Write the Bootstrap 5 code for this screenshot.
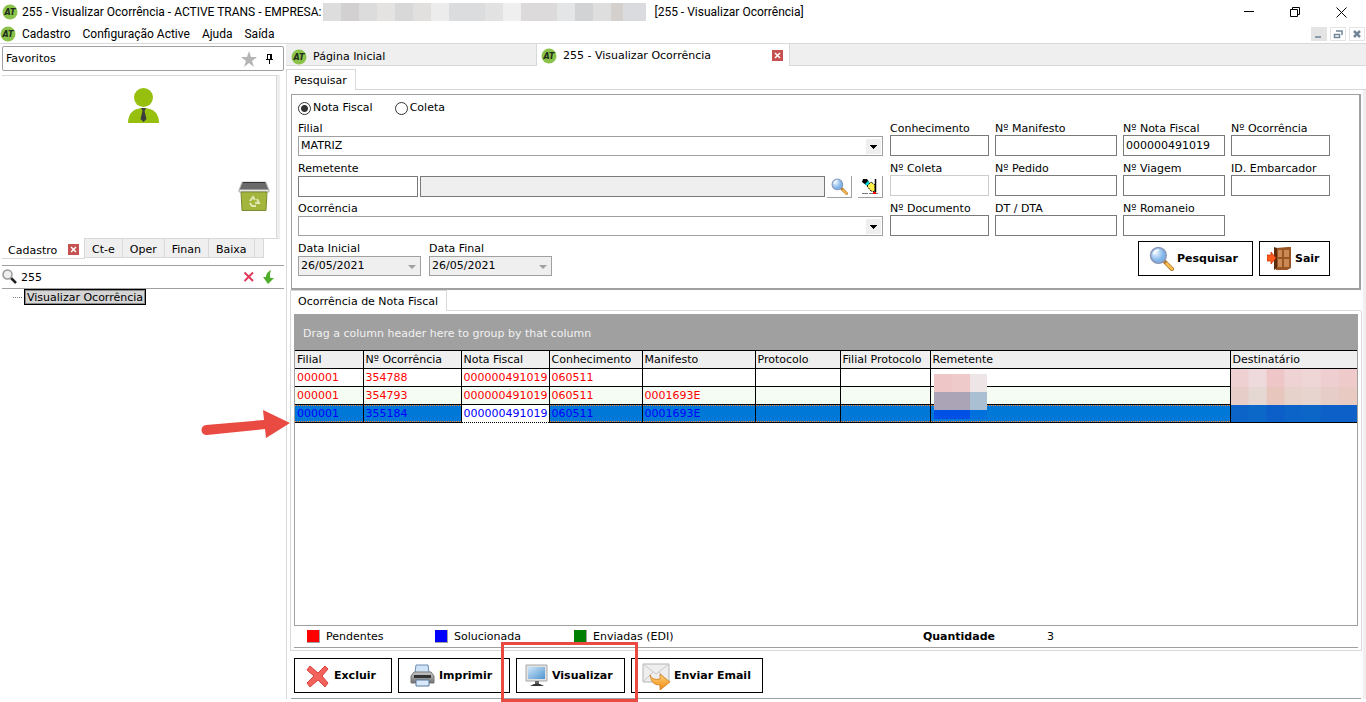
<!DOCTYPE html>
<html lang="pt-BR">
<head>
<meta charset="utf-8">
<meta name="viewport" content="width=device-width, initial-scale=1">
<title>255 - Visualizar Ocorrência - ACTIVE TRANS</title>
<link href="https://cdn.jsdelivr.net/npm/bootstrap@5.3.0/dist/css/bootstrap.min.css" rel="stylesheet">
<style>
:root{--line:#d9d9d9;--edge:#a0a0a0;--face:#efefef;--mark:#e94b43}
body{font:11px/14px "DejaVu Sans",Verdana,sans-serif;color:#000;background:#fff}
svg{display:block;flex:none}
button,input,select{font:inherit;color:inherit;border-radius:0}
.plain{border:0;background:none;padding:0}
a{color:inherit;text-decoration:none}
.ui{font:12px/16px Roboto,"Segoe UI",sans-serif}
.titlebar{height:24px;padding-left:2px}
.masked{width:323px;height:18px;margin:0 8px 0 2px;background:linear-gradient(90deg,#dedddd 0 18px,#d2d0d0 0 36px,#dcdcdc 0 54px,#e4e3e2 0 72px,#d8d8d9 0 90px,#e2e0df 0 108px,#ececec 0 126px,#dbdcdd 0 162px,#e2e2e2 0 180px,#efefef 0 198px,#dcdada 0 234px,#e4e5e6 0 252px,#d2d3d4 0 270px,#dedede 0 288px,#d4d0ce 0 300px,#dadbde 0)}
.winbtns{gap:35px;padding-right:19px}
.menubar{height:20px;border-bottom:1px solid var(--line);padding-right:1px}
.menubar nav{gap:12px}
.menubar>svg{margin-right:6px}
.mdi{gap:3px}
.mdi button{width:16px;height:14px;border:1px solid #e4e4e4}
.mdi button:first-child{background:#e4e4e4}
.side{width:284px;padding-left:2px}
.favhead{height:25px;margin-top:2px;border:1px solid var(--edge);border-radius:2px;padding:0 8px 0 3px}
.favs{height:164px;margin:4px 4px 0 0;border:1px solid var(--line);border-width:1px 3px 1px 0;border-right-color:var(--face);padding:12px 7px 26px 14px;box-shadow:inset -1px 0 var(--line)}
.sidetabs .t{height:19px;padding:4px 7px 0;background:var(--face);border:solid var(--line);border-width:0 1px 1px 0;white-space:nowrap;line-height:13px}
.sidetabs .t:last-child{padding:0 4px}
.sidetabs .on{height:21px;width:83px;background:#fff;padding:6px 5px 0 6px;margin-top:-1px}
.closer{width:11px;height:11px;background:#c75050;display:block}
.find{height:24px;margin-top:6px;border:solid var(--edge);border-width:1px 0;padding-right:10px}
.find input{min-width:0;padding:0 3px;outline:0;height:20px;width:100px}
.tree{padding-left:11px}
.tree i{width:9px;border-top:1px dotted #808080}
.tree a{border:1px solid #000;outline:1px solid #8a8a8a;outline-offset:-2px;background:#d4d4d4;padding:0 2px;height:16px;line-height:15px;margin-left:2px}
.work{min-width:1078px;margin-left:2px}
.doctabs{height:22px;background:var(--face);border-bottom:1px solid var(--line);padding-left:1px;margin-bottom:3px}
.doctabs .t{width:250px;padding:4px 6px 0 4px;border-right:1px solid var(--line);gap:6px}
.doctabs .on{width:253px;background:#fff;height:22px;padding-top:1px}
.pagetab{height:21px;padding:4px 8px 0 7px;border:solid var(--line);border-width:1px 1px 0;background:#fff}
.rest{border-bottom:1px solid var(--line)}
.page{border-left:1px solid var(--line);border-right:3px solid var(--face);padding:4px 2px 0 4px}
.query{border:1px solid var(--edge);border-width:1px 2px 2px 1px;padding:6px 29px 0 6px;height:196px;gap:7px}
.fld{height:40px}
.fld label{display:block;height:19px;padding-top:5px;white-space:nowrap;line-height:14px}
.radios+.fld{margin-top:2px}
.cell label{padding-top:1px;height:14px}
.txt{height:21px;border:1px solid #7a7a7a;padding:0 2px;width:100%;display:block;background:#fff}
.txt:disabled{border-color:#ccc}
.code{width:120px}
.ro{background:var(--face);min-width:0;margin:0 2px}
.drop{height:20px;border:1px solid var(--edge);padding:0 18px 0 2px;width:100%;appearance:none;display:block;opacity:1;background:#fff url("data:image/svg+xml,%3Csvg xmlns='http://www.w3.org/2000/svg' width='15' height='15'%3E%3Cpath fill='%23efefef' d='M0 0h15v15H0z'/%3E%3Cpath d='M4 6h7v1H10v1H9v1H8v1H7V9H6V8H5V7H4z'/%3E%3C/svg%3E") no-repeat right 1px center}
.drop:disabled{color:#000;background:#efefef url("data:image/svg+xml,%3Csvg xmlns='http://www.w3.org/2000/svg' width='15' height='15'%3E%3Cpath fill='%23a0a0a0' d='M4 6h8L8 10z'/%3E%3C/svg%3E") no-repeat right 1px center}
.date{width:123px}
.radios{height:14px;gap:22px}
.radios label{display:flex;align-items:center;gap:2px}
.radios input{appearance:none;margin:0;width:13px;height:13px;border:1px solid #333;border-radius:50%}
.radios input:checked{background:radial-gradient(circle,#333 0 3px,#fff 4px)}
.tool{width:25px;height:22px;border:solid var(--edge);border-width:0 1px 1px 0;background:#fff;padding:0 0 0 4px}
.tool+.tool{margin-left:6px}
.codes{display:grid;grid-template-columns:99px 122px 102px 99px;column-gap:6px;padding-top:20px}
.cmd{height:35px;border:1px solid #000;background:#fff;font-weight:700;display:flex;align-items:center;padding:0 0 0 10px;gap:3px;white-space:nowrap;flex:none}
.cmd-search{width:115px}.cmd-exit{width:71px;padding-left:7px}
.cmd-del{width:98px}.cmd-print{width:112px}.cmd-view{width:109px;padding-left:8px}.cmd-mail{width:132px}
.result{border:1px solid var(--line);border-top:0;padding:3px 3px 2px;margin:0 -1px 0 -1px}
.gridbox{border:1px solid var(--edge);height:312px;position:relative;background:#fff}
.group{height:35px;background:var(--edge);color:#f0f0f0;padding:12px 8px 0}
.occ{table-layout:fixed;width:100%;border-collapse:collapse}
.occ th,.occ td{height:18px;padding:1px 2px 0;border:1px solid #000;font-weight:400;line-height:16px;white-space:nowrap;overflow:hidden}
.occ th{background:var(--face)}
.occ tr>*:first-child{border-left:0}.occ tr>*:last-child{border-right:0}
.occ td{color:red}
.occ .alt td{background:#f4fcf4}
.occ .sel td{color:#00f;background:repeating-linear-gradient(90deg,#ff8728 0 1px,#0078d7 1px 2px) 0 0/100% 1px no-repeat,repeating-linear-gradient(90deg,#ff8728 0 1px,#0078d7 1px 2px) 0 100%/100% 1px no-repeat,#0078d7}
.occ .sel .focus{background:#fff;border-style:dotted}
.occ tr .h1{background:linear-gradient(90deg,#efd0d2 0 18px,#eedadc 0 36px,#efc6c8 0 54px,#efd2d3 0 72px,#eed6d7 0 90px,#efced1 0 108px,#efcaca 0)}
.occ tr.alt .h2{background:linear-gradient(90deg,#e7cdc8 0 18px,#e5d7d2 0 36px,#e7c6be 0 54px,#e7d1cb 0 72px,#e8d4ce 0 90px,#e7cdc8 0 108px,#e8cac2 0)}
.occ tr.sel .h3{background:linear-gradient(90deg,#0c63c8 0 18px,#0c68c8 0 36px,#0c5ec8 0 54px,#0c63c8 0 72px,#0c66c8 0 90px,#0c60c8 0)}
.occ .h1,.occ .h2{border-bottom:0}
.occ .h2,.occ .h3{border-top:0}
.veil{position:absolute;left:639px;top:59px;width:53px;height:45px;background:linear-gradient(90deg,#efc6c8 0 18px,#eecaca 0 36px,#eee6e6 0) 0 0/100% 18px no-repeat,linear-gradient(90deg,#aba4b7 0 36px,#abbfd2 0) 0 18px/100% 18px no-repeat,linear-gradient(90deg,#0050e6 0 36px,#0070dd 0) 0 36px/100% 9px no-repeat}
.arrow{position:absolute;left:-95px;top:94px}
.legend{height:22px;border-bottom:1px solid var(--edge);padding-left:13px}
.chip{width:13px;height:13px;border:solid var(--edge);border-width:0 1px 1px 0;margin-right:6px}
.legend .k{width:128px}
.legend .k+.k{width:139px}
.qty{margin:0 304px 0 52px}
.actions{padding:7px 0 5px 3px;gap:6px;border-bottom:1px solid var(--edge);margin-bottom:3px}
.ring{position:absolute;left:-15px;right:-13px;top:-16px;height:60px;border:3px solid var(--mark);pointer-events:none;z-index:2}
</style>
</head>
<body>
<svg width="0" height="0" class="position-absolute">
<defs>
<radialGradient id="glass" cx=".35" cy=".35"><stop offset="0" stop-color="#e8f4ff"/><stop offset="1" stop-color="#7fb4ea"/></radialGradient>
<linearGradient id="screen" x2="1" y2="1"><stop offset="0" stop-color="#cfe6f8"/><stop offset="1" stop-color="#4f94cf"/></linearGradient>
<linearGradient id="orange" x2="0" y2="1"><stop offset="0" stop-color="#ffd27a"/><stop offset="1" stop-color="#f08a12"/></linearGradient>
<linearGradient id="metal" x2="0" y2="1"><stop offset="0" stop-color="#c9c9c9"/><stop offset="1" stop-color="#6f6f6f"/></linearGradient>
<symbol id="logo" viewBox="0 0 16 16"><circle cx="8" cy="8" r="7.5" fill="#8bc34a"/><text x="8" y="11" text-anchor="middle" font-family="DejaVu Sans" font-size="8" font-weight="700" font-style="italic" fill="#1f2d1a">AT</text></symbol>
<symbol id="lens" viewBox="0 0 24 24"><path d="M15 15l7 7" stroke="#b07a30" stroke-width="4" stroke-linecap="round"/><path d="M17 17l5 5" stroke="#f8bc50" stroke-width="2.500" stroke-linecap="round"/><circle cx="9" cy="9" r="7.500" fill="url(#glass)" stroke="#8a98b8" stroke-width="1.500"/><path d="M4.500 8a5 5 0 015-4" stroke="#fff" stroke-width="1.500" fill="none"/></symbol>
<symbol id="x" viewBox="0 0 11 11"><path d="M3 3l5 5M8 3l-5 5" stroke="#fff" stroke-width="1.500"/></symbol>
</defs>
</svg>
<div class="d-flex flex-column">
<header class="ui">
  <div class="titlebar d-flex align-items-center">
    <svg width="16" height="16" class="me-1"><use href="#logo"/></svg>
    <span class="text-nowrap">255 - Visualizar Ocorrência - ACTIVE TRANS - EMPRESA:</span>
    <span class="masked"></span>
    <span class="text-nowrap">[255 - Visualizar Ocorrência]</span>
    <div class="winbtns d-flex ms-auto">
      <button class="plain" aria-label="Minimizar"><svg width="11" height="11"><path d="M0 4.500h10" stroke="#000"/></svg></button>
      <button class="plain" aria-label="Restaurar"><svg width="11" height="11"><path d="M.5 2.500h7v7h-7zM2.500 2.500v-2h7v7h-2" fill="none" stroke="#000"/></svg></button>
      <button class="plain" aria-label="Fechar"><svg width="11" height="11"><path d="M.5.5l10 10M10.500.5l-10 10" stroke="#000"/></svg></button>
    </div>
  </div>
  <div class="menubar d-flex align-items-center">
    <svg width="16" height="16"><use href="#logo"/></svg>
    <nav class="d-flex"><a href="#">Cadastro</a><a href="#">Configuração Active</a><a href="#">Ajuda</a><a href="#">Saída</a></nav>
    <div class="mdi d-flex ms-auto">
      <button class="plain" aria-label="Minimizar janela"><svg width="14" height="12"><path d="M3 9h6" stroke="#8a9db0" stroke-width="2"/></svg></button>
      <button class="plain" aria-label="Restaurar janela"><svg width="14" height="12"><path d="M5 3h6v4M3.500 6.500h5v3h-5z" fill="none" stroke="#73879b" stroke-width="1.500"/></svg></button>
      <button class="plain" aria-label="Fechar janela"><svg width="14" height="12"><path d="M4 3l6 6M10 3l-6 6" stroke="#73879b" stroke-width="2.500"/></svg></button>
    </div>
  </div>
</header>
<div class="d-flex">
<aside class="side flex-shrink-0">
  <div class="favhead d-flex align-items-center"><span class="flex-grow-1">Favoritos</span>
    <svg width="16" height="16" class="me-1"><path d="M8 0l2 6h6l-5 4 2 6-5-4-5 4 2-6-5-4h6z" fill="#b4b4b4"/></svg>
    <svg width="10" height="12" class="ms-1"><path d="M2.500 1v5M2.500 1.500h4M6.500 1v5M5.500 1v5M1 6.500h7M4.500 7v4" stroke="#000" fill="none"/></svg>
  </div>
  <div class="favs d-flex flex-column justify-content-between align-items-end">
    <svg width="31" height="36" class="align-self-center"><circle cx="15.500" cy="9.500" r="9.500" fill="#97bf0d"/><path d="M0 35c0-10 6-15 15.500-15S31 25 31 35z" fill="#97bf0d"/><path d="M13 20h5l-1.500 3 2 8-3 3-3-3 2-8z" fill="#3c3c3b"/></svg>
    <svg width="32" height="31"><path d="M4 1h24l3 8H1z" fill="#6a6a6a"/><path d="M4 1h24l3 8H1z" fill="none" stroke="#c8c8c8"/><path d="M5 1.500h22" stroke="#333"/><path d="M1 8.500h30v2.500H1z" fill="#e6e6e6" stroke="#888" stroke-width=".6"/><path d="M3 11h26l-1 18.500H4z" fill="#a3b53c" stroke="#7c8b32"/><path d="M12 20l3-4 2 3M19 18l2 4h-4M18 25h-4l-2-3" fill="none" stroke="#dfe8b0" stroke-width="2"/></svg>
  </div>
  <div class="sidetabs d-flex">
    <div class="t on d-flex justify-content-between"><a href="#">Cadastro</a><button class="plain closer" aria-label="Fechar aba"><svg width="11" height="11"><use href="#x"/></svg></button></div>
    <a class="t" href="#">Ct-e</a><a class="t" href="#">Oper</a><a class="t" href="#">Finan</a><a class="t" href="#">Baixa</a><span class="t"></span>
  </div>
  <div class="find d-flex align-items-center">
    <svg width="16" height="16"><path d="M9 9l5 5" stroke="#222" stroke-width="2.500"/><circle cx="5.500" cy="5.500" r="4.500" fill="#eee" stroke="#999" stroke-width="1.500"/></svg>
    <input class="plain flex-grow-1" value="255" aria-label="Localizar">
    <button class="plain me-1" aria-label="Limpar"><svg width="12" height="12"><path d="M1.500 1.500l8.500 8.500M10 1.500L1.500 10" stroke="#e23a5c" stroke-width="2"/></svg></button>
    <button class="plain ms-1" aria-label="Próximo"><svg width="11" height="14"><path d="M8 0C4 2 3 5 3 7H0l5 7 6-6H7.500C6.500 5 7 3 8 0z" fill="#4fae2a"/></svg></button>
  </div>
  <div class="tree d-flex align-items-center"><i></i><a href="#">Visualizar Ocorrência</a></div>
</aside>
<main class="work flex-grow-1">
  <div class="doctabs d-flex">
    <div class="t d-flex align-items-center"><svg width="16" height="16"><use href="#logo"/></svg><a href="#">Página Inicial</a></div>
    <div class="t on d-flex align-items-center"><svg width="16" height="16"><use href="#logo"/></svg><a href="#">255 - Visualizar Ocorrência</a><button class="plain closer ms-auto" aria-label="Fechar aba"><svg width="11" height="11"><use href="#x"/></svg></button></div>
  </div>
  <div class="d-flex"><a class="pagetab" href="#">Pesquisar</a><div class="rest flex-grow-1"></div></div>
  <div class="page">
    <form class="query d-flex">
      <div class="flex-grow-1">
        <div class="radios d-flex">
          <label><input type="radio" name="tipo" checked>Nota Fiscal</label>
          <label><input type="radio" name="tipo">Coleta</label>
        </div>
        <div class="fld"><label for="filial">Filial</label><select id="filial" class="drop"><option>MATRIZ</option></select></div>
        <div class="fld"><label for="rem">Remetente</label>
          <div class="d-flex"><input id="rem" class="txt code flex-shrink-0"><input class="txt ro flex-grow-1" readonly aria-label="Nome do remetente">
            <button type="button" class="tool flex-shrink-0" aria-label="Buscar"><svg width="17" height="17"><use href="#lens"/></svg></button>
            <button type="button" class="tool flex-shrink-0" aria-label="Limpar remetente"><svg width="16" height="17"><path d="M1 1h4l2 3-3 3-4-3z"/><path d="M3 6l3-3 2 2-3 3z" fill="#00d8d8"/><path d="M5 8l4-4 4 3v7l-4-1z" fill="#fff04a" stroke="#000" stroke-dasharray="2 1"/><path d="M13.500 1v13" stroke="#000" stroke-width="1.500"/><path d="M0 15.500h16" stroke="#777" stroke-dasharray="6 1"/><path d="M11 15h3" stroke="red" stroke-width="2"/></svg></button>
          </div></div>
        <div class="fld"><label for="oco">Ocorrência</label><select id="oco" class="drop"><option></option></select></div>
        <div class="fld d-flex gap-2">
          <div><label for="di">Data Inicial</label><select id="di" class="drop date" disabled><option>26/05/2021</option></select></div>
          <div><label for="df">Data Final</label><select id="df" class="drop date" disabled><option>26/05/2021</option></select></div>
        </div>
      </div>
      <div>
        <div class="codes">
          <div class="fld cell"><label for="c1">Conhecimento</label><input id="c1" class="txt"></div>
          <div class="fld cell"><label for="c2">Nº Manifesto</label><input id="c2" class="txt"></div>
          <div class="fld cell"><label for="c3">Nº Nota Fiscal</label><input id="c3" class="txt" value="000000491019"></div>
          <div class="fld cell"><label for="c4">Nº Ocorrência</label><input id="c4" class="txt"></div>
          <div class="fld cell"><label for="c5">Nº Coleta</label><input id="c5" class="txt" disabled></div>
          <div class="fld cell"><label for="c6">Nº Pedido</label><input id="c6" class="txt"></div>
          <div class="fld cell"><label for="c7">Nº Viagem</label><input id="c7" class="txt"></div>
          <div class="fld cell"><label for="c8">ID. Embarcador</label><input id="c8" class="txt"></div>
          <div class="fld cell"><label for="c9">Nº Documento</label><input id="c9" class="txt"></div>
          <div class="fld cell"><label for="c10">DT / DTA</label><input id="c10" class="txt"></div>
          <div class="fld cell"><label for="c11">Nº Romaneio</label><input id="c11" class="txt"></div>
        </div>
        <div class="d-flex justify-content-end" style="gap:6px">
          <button type="button" class="cmd cmd-search"><svg width="25" height="25"><use href="#lens"/></svg>Pesquisar</button>
          <button type="button" class="cmd cmd-exit"><svg width="25" height="25"><path d="M9 2l12-1h3v21l-4 2H9z" fill="#9a5524"/><path d="M7 1l3 1v20l-3 2z" fill="#5b2b0c"/><path d="M11 4h4v7h-4zM17 4h5v7h-5zM11 13h4v8h-4zM17 13h5v8h-5z" fill="#c98a55"/><path d="M0 9h4V6l5 6-5 6v-3H0z" fill="#ff5a1c" stroke="#c32b00" stroke-width=".7"/></svg>Sair</button>
        </div>
      </div>
    </form>
    <div class="d-flex" style="margin-left:-1px"><a class="pagetab" href="#">Ocorrência de Nota Fiscal</a><div class="rest flex-grow-1"></div></div>
    <section class="result">
      <div class="gridbox">
        <div class="group">Drag a column header here to group by that column</div>
        <table class="occ">
          <colgroup><col style="width:68px"><col style="width:98px"><col style="width:88px"><col style="width:93px"><col style="width:113px"><col style="width:85px"><col style="width:90px"><col style="width:300px"><col></colgroup>
          <thead><tr><th>Filial</th><th>Nº Ocorrência</th><th>Nota Fiscal</th><th>Conhecimento</th><th>Manifesto</th><th>Protocolo</th><th>Filial Protocolo</th><th>Remetente</th><th>Destinatário</th></tr></thead>
          <tbody>
          <tr><td>000001</td><td>354788</td><td>000000491019</td><td>060511</td><td></td><td></td><td></td><td></td><td class="h1"></td></tr>
          <tr class="alt"><td>000001</td><td>354793</td><td>000000491019</td><td>060511</td><td>0001693E</td><td></td><td></td><td></td><td class="h2"></td></tr>
          <tr class="sel"><td>000001</td><td>355184</td><td class="focus">000000491019</td><td>060511</td><td>0001693E</td><td></td><td></td><td></td><td class="h3"></td></tr>
          </tbody>
        </table>
        <span class="veil"></span>
        <svg class="arrow" width="90" height="32"><path d="M6 16l58-5-1-10 27 13-24 15-1-9-58 6a5 5 0 01-1-10z" fill="#e94b43"/></svg>
      </div>
      <div class="legend d-flex align-items-center">
        <div class="k d-flex"><span class="chip" style="background:red"></span>Pendentes</div>
        <div class="k d-flex"><span class="chip" style="background:blue"></span>Solucionada</div>
        <div class="d-flex flex-grow-1"><span class="chip" style="background:green"></span>Enviadas (EDI)</div>
        <b>Quantidade</b><span class="qty">3</span>
      </div>
    </section>
    <div class="actions d-flex">
      <button class="cmd cmd-del"><svg width="26" height="24"><path d="M5 2l8 7 7-7 3 3-6 7 6 7-3 4-7-7-8 7-3-4 7-7-7-6z" fill="#f4625c" stroke="#d84040"/></svg>Excluir</button>
      <button class="cmd cmd-print"><svg width="27" height="24"><path d="M7 1h12l1 8H6z" fill="#cfe4f8" stroke="#6d8db0"/><path d="M5 8h17l3 4v7H2v-7z" fill="url(#metal)" stroke="#777"/><path d="M5 11h17v3H5z" fill="#333"/><path d="M7 16h13v6H7z" fill="#d9e9fa" stroke="#56789c"/></svg>Imprimir</button>
      <div class="position-relative"><button class="cmd cmd-view"><svg width="24" height="24"><path d="M1 1h21v16H1z" fill="#e2e2e2" stroke="#a8a8a8"/><path d="M3 3h17v12H3z" fill="url(#screen)"/><path d="M10 17h4v3h-4z" fill="#666"/><path d="M5 22q7-5 14 0z" fill="#333"/></svg>Visualizar</button><span class="ring"></span></div>
      <button class="cmd cmd-mail"><svg width="29" height="28"><path d="M1 2h26v18H1z" fill="#eee" stroke="#b5b5b5"/><path d="M1 2l13 10L27 2M1 20l10-10M27 20L17 10" fill="none" stroke="#c8c8c8"/><path d="M8 13c2 4 5 5 10 4v-5l10 8-10 8v-5c-6 0-9-3-10-10z" fill="url(#orange)" stroke="#c87408" stroke-width=".7"/></svg>Enviar Email</button>
    </div>
  </div>
</main>
</div>
</div>
<script src="https://cdn.jsdelivr.net/npm/bootstrap@5.3.0/dist/js/bootstrap.bundle.min.js"></script>
</body>
</html>
